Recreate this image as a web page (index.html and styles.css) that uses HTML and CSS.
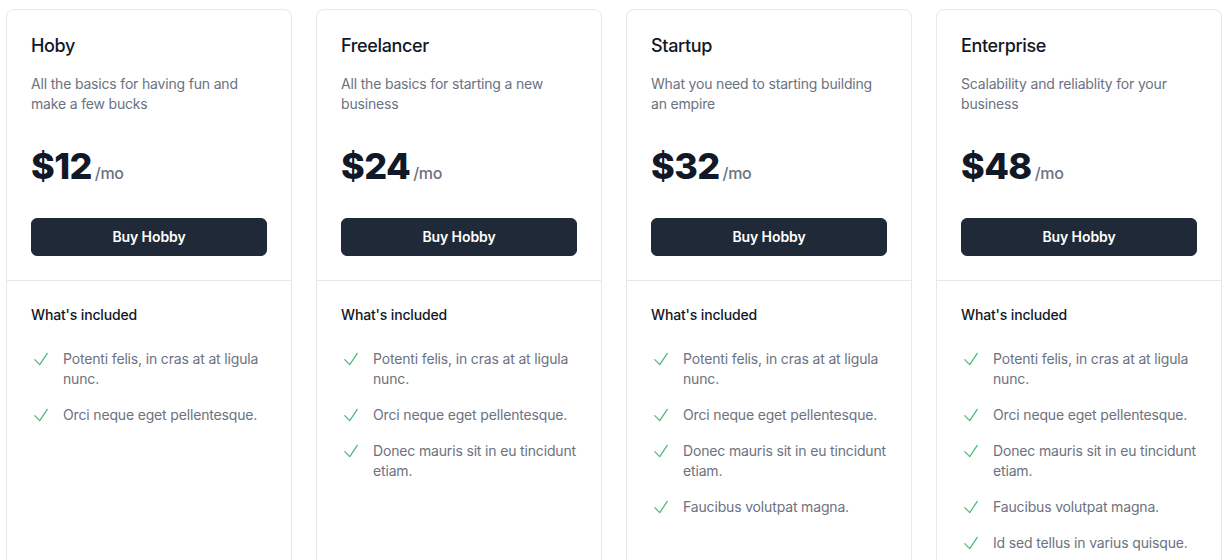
FILE: index.html
```html
<!DOCTYPE html>
<html lang="en">
<head>
<meta charset="utf-8">
<title>Pricing</title>
<link rel="stylesheet" href="styles.css">
</head>
<body>
<div class="grid">
  <div class="card">
    <div class="top">
      <h2 class="title">Hoby</h2>
      <p class="desc">All the basics for having fun and make a few bucks</p>
      <p class="price"><span class="amount">$12</span><span class="per">/mo</span></p>
      <a class="btn" href="#">Buy Hobby</a>
    </div>
    <div class="bottom">
      <h3 class="inc">What's included</h3>
      <ul class="list">
        <li><svg class="check" viewBox="0 0 24 24" fill="none" stroke="currentColor" stroke-width="1.5"><path stroke-linecap="round" stroke-linejoin="round" d="m4.5 12.75 6 6 9-13.5"/></svg><span>Potenti felis, in cras at at ligula nunc.</span></li>
        <li><svg class="check" viewBox="0 0 24 24" fill="none" stroke="currentColor" stroke-width="1.5"><path stroke-linecap="round" stroke-linejoin="round" d="m4.5 12.75 6 6 9-13.5"/></svg><span>Orci neque eget pellentesque.</span></li>
      </ul>
    </div>
  </div>
  <div class="card">
    <div class="top">
      <h2 class="title">Freelancer</h2>
      <p class="desc">All the basics for starting a new business</p>
      <p class="price"><span class="amount">$24</span><span class="per">/mo</span></p>
      <a class="btn" href="#">Buy Hobby</a>
    </div>
    <div class="bottom">
      <h3 class="inc">What's included</h3>
      <ul class="list">
        <li><svg class="check" viewBox="0 0 24 24" fill="none" stroke="currentColor" stroke-width="1.5"><path stroke-linecap="round" stroke-linejoin="round" d="m4.5 12.75 6 6 9-13.5"/></svg><span>Potenti felis, in cras at at ligula nunc.</span></li>
        <li><svg class="check" viewBox="0 0 24 24" fill="none" stroke="currentColor" stroke-width="1.5"><path stroke-linecap="round" stroke-linejoin="round" d="m4.5 12.75 6 6 9-13.5"/></svg><span>Orci neque eget pellentesque.</span></li>
        <li><svg class="check" viewBox="0 0 24 24" fill="none" stroke="currentColor" stroke-width="1.5"><path stroke-linecap="round" stroke-linejoin="round" d="m4.5 12.75 6 6 9-13.5"/></svg><span>Donec mauris sit in eu tincidunt etiam.</span></li>
      </ul>
    </div>
  </div>
  <div class="card">
    <div class="top">
      <h2 class="title">Startup</h2>
      <p class="desc">What you need to starting building an empire</p>
      <p class="price"><span class="amount">$32</span><span class="per">/mo</span></p>
      <a class="btn" href="#">Buy Hobby</a>
    </div>
    <div class="bottom">
      <h3 class="inc">What's included</h3>
      <ul class="list">
        <li><svg class="check" viewBox="0 0 24 24" fill="none" stroke="currentColor" stroke-width="1.5"><path stroke-linecap="round" stroke-linejoin="round" d="m4.5 12.75 6 6 9-13.5"/></svg><span>Potenti felis, in cras at at ligula nunc.</span></li>
        <li><svg class="check" viewBox="0 0 24 24" fill="none" stroke="currentColor" stroke-width="1.5"><path stroke-linecap="round" stroke-linejoin="round" d="m4.5 12.75 6 6 9-13.5"/></svg><span>Orci neque eget pellentesque.</span></li>
        <li><svg class="check" viewBox="0 0 24 24" fill="none" stroke="currentColor" stroke-width="1.5"><path stroke-linecap="round" stroke-linejoin="round" d="m4.5 12.75 6 6 9-13.5"/></svg><span>Donec mauris sit in eu tincidunt etiam.</span></li>
        <li><svg class="check" viewBox="0 0 24 24" fill="none" stroke="currentColor" stroke-width="1.5"><path stroke-linecap="round" stroke-linejoin="round" d="m4.5 12.75 6 6 9-13.5"/></svg><span>Faucibus volutpat magna.</span></li>
      </ul>
    </div>
  </div>
  <div class="card">
    <div class="top">
      <h2 class="title">Enterprise</h2>
      <p class="desc">Scalability and reliablity for your business</p>
      <p class="price"><span class="amount">$48</span><span class="per">/mo</span></p>
      <a class="btn" href="#">Buy Hobby</a>
    </div>
    <div class="bottom">
      <h3 class="inc">What's included</h3>
      <ul class="list">
        <li><svg class="check" viewBox="0 0 24 24" fill="none" stroke="currentColor" stroke-width="1.5"><path stroke-linecap="round" stroke-linejoin="round" d="m4.5 12.75 6 6 9-13.5"/></svg><span>Potenti felis, in cras at at ligula nunc.</span></li>
        <li><svg class="check" viewBox="0 0 24 24" fill="none" stroke="currentColor" stroke-width="1.5"><path stroke-linecap="round" stroke-linejoin="round" d="m4.5 12.75 6 6 9-13.5"/></svg><span>Orci neque eget pellentesque.</span></li>
        <li><svg class="check" viewBox="0 0 24 24" fill="none" stroke="currentColor" stroke-width="1.5"><path stroke-linecap="round" stroke-linejoin="round" d="m4.5 12.75 6 6 9-13.5"/></svg><span>Donec mauris sit in eu tincidunt etiam.</span></li>
        <li><svg class="check" viewBox="0 0 24 24" fill="none" stroke="currentColor" stroke-width="1.5"><path stroke-linecap="round" stroke-linejoin="round" d="m4.5 12.75 6 6 9-13.5"/></svg><span>Faucibus volutpat magna.</span></li>
        <li><svg class="check" viewBox="0 0 24 24" fill="none" stroke="currentColor" stroke-width="1.5"><path stroke-linecap="round" stroke-linejoin="round" d="m4.5 12.75 6 6 9-13.5"/></svg><span>Id sed tellus in varius quisque.</span></li>
      </ul>
    </div>
  </div>
</div>
</body>
</html>
```
FILE: styles.css
```css
* { box-sizing: border-box; }
html, body { margin: 0; padding: 0; background: #fff; }
body {
  font-family: Inter, "Noto Sans", sans-serif;
  color: #111827;
  -webkit-font-smoothing: antialiased;
}
.grid {
  display: grid;
  grid-template-columns: repeat(4, 286px);
  column-gap: 24px;
  padding: 9px 7px 0 6px;
}
.card {
  border: 1px solid #e5e7eb;
  border-radius: 8px;
  background: #fff;
}
.top {
  padding: 24px;
  border-bottom: 1px solid #e5e7eb;
}
.title {
  margin: 0;
  font-size: 18px;
  line-height: 24px;
  font-weight: 500;
  letter-spacing: -0.35px;
  color: #111827;
}
.desc {
  margin: 16px 0 0;
  font-size: 14px;
  line-height: 20px;
  letter-spacing: -0.18px;
  color: #6b7280;
}
.price {
  margin: 32px 0 0;
  height: 40px;
  display: flex;
  align-items: baseline;
}
.amount {
  font-size: 36px;
  line-height: 40px;
  font-weight: 800;
  color: #111827;
  letter-spacing: -0.6px;
}
.per {
  margin-left: 3px;
  font-size: 16px;
  line-height: 24px;
  font-weight: 500;
  letter-spacing: -0.3px;
  color: #6b7280;
}
.btn {
  display: block;
  margin-top: 32px;
  background: #1f2937;
  border: 1px solid #1f2937;
  border-radius: 6px;
  padding: 8px 0;
  font-size: 14px;
  line-height: 20px;
  font-weight: 600;
  letter-spacing: -0.1px;
  color: #fff;
  text-align: center;
  text-decoration: none;
}
.bottom {
  padding: 24px 24px 32px;
}
.inc {
  margin: 0;
  font-size: 14px;
  line-height: 20px;
  font-weight: 500;
  letter-spacing: -0.15px;
  color: #111827;
}
.list {
  list-style: none;
  margin: 24px 0 0;
  padding: 0;
  display: flex;
  flex-direction: column;
  gap: 16px;
}
.list li {
  display: flex;
  gap: 12px;
}
.check {
  flex-shrink: 0;
  width: 20px;
  height: 20px;
  color: #48bb78;
}
.list span {
  font-size: 14px;
  line-height: 20px;
  letter-spacing: -0.16px;
  color: #6b7280;
}
```
